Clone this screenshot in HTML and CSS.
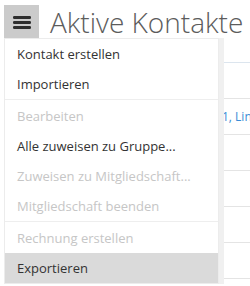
FILE: index.html
```html
<!DOCTYPE html>
<html lang="de">

<head>
  <meta charset="UTF-8">
  <meta name="viewport" content="width=device-width, initial-scale=1.0">
  <title>Aktive Kontakte</title>
  <link rel="stylesheet" href="styles.css">
</head>

<body>
  <div class="title-bar">
    <button type="button" class="menu-toggle">
      <svg width="18" height="14" viewBox="0 0 18 14">
        <rect x="0" y="1" width="18" height="3" rx="1.2" fill="#2e2e2e" />
        <rect x="0" y="6" width="18" height="3" rx="1.2" fill="#2e2e2e" />
        <rect x="0" y="11" width="18" height="3" rx="1.2" fill="#2e2e2e" />
      </svg>
    </button>
    <h1 class="page-title">Aktive Kontakte</h1>
  </div>

  <div class="content">
    <div class="contact-table">
      <div class="table-head"></div>
      <div class="table-row"></div>
      <div class="table-row"><span class="cell-link">1, Lin</span></div>
      <div class="table-row"></div>
      <div class="table-row"></div>
      <div class="table-row"></div>
      <div class="table-row"><span class="cell-mark"></span></div>
      <div class="table-row"></div>
    </div>

    <ul class="dropdown">
      <li class="item">Kontakt erstellen</li>
      <li class="item">Importieren</li>
      <li class="divider"></li>
      <li class="item disabled">Bearbeiten</li>
      <li class="item">Alle zuweisen zu Gruppe...</li>
      <li class="item disabled">Zuweisen zu Mitgliedschaft...</li>
      <li class="item disabled">Mitgliedschaft beenden</li>
      <li class="divider"></li>
      <li class="item disabled">Rechnung erstellen</li>
      <li class="item active">Exportieren</li>
    </ul>
  </div>
</body>

</html>
```

FILE: styles.css
```css
body {
  font-family: "Open Sans", "DejaVu Sans", sans-serif;
  margin: 0;
  padding: 0;
  background-color: #fff;
  overflow: hidden;
}

.title-bar {
  display: flex;
  align-items: center;
  gap: 11px;
  padding: 5px 4px 0;
  height: 34px;
}

.menu-toggle {
  display: flex;
  flex-shrink: 0;
  justify-content: center;
  align-items: center;
  width: 35px;
  height: 34px;
  padding: 0;
  border-width: 0;
  background-color: #cbcbcb;
}

.page-title {
  margin: 0;
  font-size: 28px;
  font-weight: 300;
  line-height: 34px;
  color: #5c5c5c;
  white-space: nowrap;
}

.content {
  position: relative;
}

.contact-table {
  padding-left: 4px;
}

.table-head {
  height: 23px;
  border-bottom: 1px solid #dce5ee;
}

.table-row {
  display: flex;
  align-items: center;
  height: 35px;
  padding-left: 218px;
  border-bottom: 1px solid #e4e4e4;
}

.cell-link {
  font-size: 12px;
  color: #3b8dd6;
  white-space: nowrap;
}

.cell-mark {
  width: 1px;
  height: 10px;
  background-color: #6fa8de;
}

.dropdown {
  position: absolute;
  top: -1px;
  left: 4px;
  width: 213px;
  margin: 0;
  padding: 0;
  list-style: none;
  background-color: #fff;
  border: 1px solid #ececec;
  box-shadow: 5px 0 0 #f0f0f0;
}

.item {
  height: 30px;
  padding-left: 12px;
  font-size: 13px;
  line-height: 30px;
  color: #333;
  white-space: nowrap;
}

.item.disabled {
  color: #c6c6c6;
}

.item.active {
  background-color: #dadada;
}

.divider {
  height: 1px;
  margin-bottom: 1px;
  background-color: #eeeeee;
}
```
